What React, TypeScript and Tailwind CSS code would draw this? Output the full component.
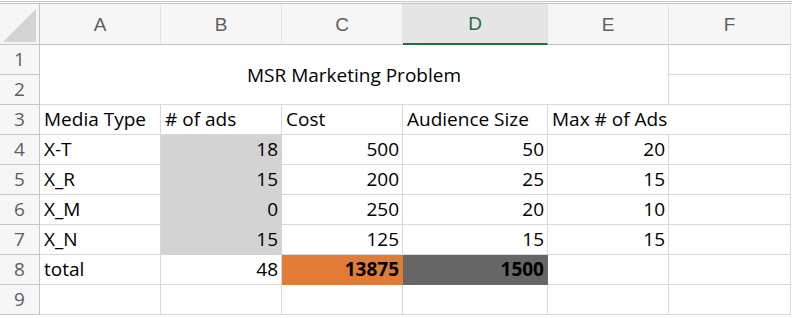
import React from 'react';

const cols = ['A', 'B', 'C', 'D', 'E', 'F'];

type Row = {
  n: number;
  type: string;
  ads: number;
  cost: number;
  aud: number;
  max: number;
};

const rows: Row[] = [
  { n: 4, type: 'X-T', ads: 18, cost: 500, aud: 50, max: 20 },
  { n: 5, type: 'X_R', ads: 15, cost: 200, aud: 25, max: 15 },
  { n: 6, type: 'X_M', ads: 0, cost: 250, aud: 20, max: 10 },
  { n: 7, type: 'X_N', ads: 15, cost: 125, aud: 15, max: 15 },
];

const cell = 'border-r border-b border-[#d9d9d9] leading-[29px] whitespace-nowrap';
const left = `${cell} pl-[4px] text-left`;
const right = `${cell} pr-[3px] text-right`;
const rowNum = 'border-r border-b border-[#c4c4c4] bg-[#f6f6f6] text-[#5e5e5e] text-center leading-[29px]';

const App: React.FC = () => {
  return (
    <div className="w-[792px] h-[318px] bg-white text-black overflow-hidden" style={{ fontFamily: '"Open Sans", "Noto Sans", sans-serif' }}>
      <div className="mt-px h-[3px] border-y border-[#c6c6c6] bg-[#fafafa]" />
      <div className="grid grid-cols-[40px_121px_121px_121px_145px_121px_122px] grid-rows-[41px_repeat(9,30px)] text-[19px]">
        {/* corner */}
        <div className="border-r border-b border-[#c4c4c4] bg-[#f6f6f6] flex items-end justify-end pr-[3px] pb-[2px]">
          <svg width="33" height="33" viewBox="0 0 33 33">
            <polygon points="33,0 33,33 0,33" fill="#d4d4d4" />
          </svg>
        </div>
        {cols.map((c) =>
          c === 'D' ? (
            <div key={c} className="border-r border-[#e2e2e2] bg-[#e6e6e6] border-b-2 border-b-[#1e7145] flex items-center justify-center text-[#1e7145] pt-px" style={{ fontFamily: '"Liberation Sans", sans-serif' }}>
              {c}
            </div>
          ) : (
            <div key={c} className="border-r border-[#e2e2e2] border-b border-b-[#c4c4c4] bg-[#f6f6f6] flex items-center justify-center text-[#5e5e5e] pt-[2px]" style={{ fontFamily: '"Liberation Sans", sans-serif' }}>
              {c}
            </div>
          )
        )}

        {/* rows 1-2 */}
        <div className={rowNum}>1</div>
        <div className="col-span-5 row-span-2 border-r border-b border-[#d9d9d9] flex items-center justify-center leading-[29px] pt-px">
          MSR Marketing Problem
        </div>
        <div className={cell} />
        <div className={rowNum}>2</div>
        <div className={cell} />

        {/* row 3 */}
        <div className={rowNum}>3</div>
        <div className={left}>Media Type</div>
        <div className={left}>{'# of ads'}</div>
        <div className={left}>Cost</div>
        <div className={left}>Audience Size</div>
        <div className="border-b border-[#d9d9d9] leading-[29px] whitespace-nowrap pl-[4px]">{'Max # of Ads'}</div>
        <div className={cell} />

        {rows.map((r) => (
          <React.Fragment key={r.n}>
            <div className={rowNum}>{r.n}</div>
            <div className={left}>{r.type}</div>
            <div className="bg-[#d3d3d3] border-r border-b border-[#d3d3d3] leading-[29px] text-right pr-[3px]">{r.ads}</div>
            <div className={right}>{r.cost}</div>
            <div className={right}>{r.aud}</div>
            <div className={right}>{r.max}</div>
            <div className={cell} />
          </React.Fragment>
        ))}

        {/* row 8 */}
        <div className={rowNum}>8</div>
        <div className={left}>total</div>
        <div className={right}>48</div>
        <div className="bg-[#e07c35] border-r border-b border-[#e07c35] leading-[29px] text-right pr-[3px] font-bold">13875</div>
        <div className="bg-[#666666] border-r border-b border-[#666666] leading-[29px] text-right pr-[3px] font-bold">1500</div>
        <div className={cell} />
        <div className={cell} />

        {/* row 9 */}
        <div className={rowNum}>9</div>
        <div className={cell} />
        <div className={cell} />
        <div className={cell} />
        <div className={cell} />
        <div className={cell} />
        <div className={cell} />
      </div>
    </div>
  );
};

export default App;
